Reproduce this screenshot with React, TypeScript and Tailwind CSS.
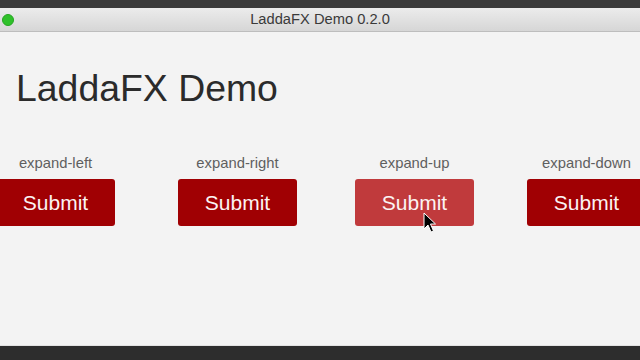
// LaddaFX demo window

interface DemoColumnProps {
  label: string;
  offset: string;
  hovered?: boolean;
}

function DemoColumn({ label, offset, hovered }: DemoColumnProps) {
  return (
    <div className={`flex flex-col items-center w-[119px] shrink-0 ${offset}`}>
      <span className="text-[14.8px] leading-[17px] text-[#5f5f5f]">{label}</span>
      <div
        className={`relative mt-[7px] w-[119px] h-[47px] rounded-[3px] flex items-center justify-center text-[21px] text-[#fbf3f3] ${
          hovered ? 'bg-[#c03a3c]' : 'bg-[#a00003]'
        }`}
      >
        Submit
        {hovered && (
          <svg
            className="absolute left-[68px] top-[33px]"
            width="13"
            height="21"
            viewBox="0 0 13 21"
          >
            <path
              d="M1 1 L1 17 L5 13 L8 20 L10.5 19 L7.5 12 L12.5 12 Z"
              fill="#000"
              stroke="#fff"
              strokeWidth="1"
              strokeLinejoin="round"
            />
          </svg>
        )}
      </div>
    </div>
  );
}

export default function App() {
  return (
    <div className="w-[640px] h-[360px] flex flex-col overflow-hidden bg-[#f3f3f3] font-['Liberation_Sans',Arial,sans-serif]">
      <div className="h-[8px] bg-[#3b3b3b]" />
      <div className="relative h-[24px] flex items-center justify-center bg-gradient-to-b from-[#ececec] to-[#d6d6d6] border-b border-[#bdbdbd]">
        <span className="absolute left-[2px] top-[6px] w-[12px] h-[12px] rounded-full bg-[#2fc12a] border border-[#25a522]" />
        <span className="text-[14.7px] text-[#3a3a3a]">LaddaFX Demo 0.2.0</span>
      </div>
      <main className="flex-1 flex flex-col">
        <h1 className="mt-[38px] pl-[16px] text-[37.4px] leading-[37px] text-[#2b2b2b]">LaddaFX Demo</h1>
        <div className="flex mt-[48px]">
          <DemoColumn label="expand-left" offset="ml-[-4px]" />
          <DemoColumn label="expand-right" offset="ml-[63px]" />
          <DemoColumn label="expand-up" offset="ml-[58px]" hovered />
          <DemoColumn label="expand-down" offset="ml-[53px]" />
        </div>
      </main>
      <div className="h-[15px] bg-[#2d2d2d] border-t border-[#e2e2e2]" />
    </div>
  );
}
